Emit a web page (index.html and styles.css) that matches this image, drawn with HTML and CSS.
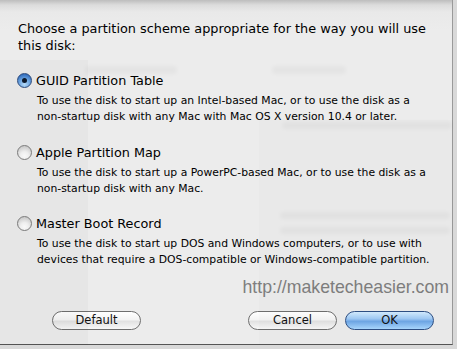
FILE: index.html
```html
<!DOCTYPE html>
<html>
<head>
<meta charset="utf-8">
<link rel="stylesheet" href="styles.css">
</head>
<body>
<div class="screen">
  <div class="sheet">
    <p class="prompt">Choose a partition scheme appropriate for the way you will use this disk:</p>
    <div class="options">
      <div class="option">
        <label class="opt-label"><span class="radio on"></span>GUID Partition Table</label>
        <p class="desc">To use the disk to start up an Intel-based Mac, or to use the disk as a non-startup disk with any Mac with Mac OS X version 10.4 or later.</p>
      </div>
      <div class="option">
        <label class="opt-label"><span class="radio"></span>Apple Partition Map</label>
        <p class="desc">To use the disk to start up a PowerPC-based Mac, or to use the disk as a non-startup disk with any Mac.</p>
      </div>
      <div class="option">
        <label class="opt-label"><span class="radio"></span>Master Boot Record</label>
        <p class="desc">To use the disk to start up DOS and Windows computers, or to use with devices that require a DOS-compatible or Windows-compatible partition.</p>
      </div>
    </div>
    <div class="watermark">http://maketecheasier.com</div>
    <div class="buttons">
      <button class="btn">Default</button>
      <div class="spacer"></div>
      <button class="btn">Cancel</button>
      <button class="btn primary">OK</button>
    </div>
  </div>
  <div class="ghost">
    <div class="gp gp-left"></div>
    <div class="gp gp-mid"></div>
    <div class="gb gb1"></div>
    <div class="gb gb2"></div>
    <div class="gb gb3"></div>
    <div class="gb gb4"></div>
    <div class="gb gb5"></div>
  </div>
</div>
</body>
</html>
```
FILE: styles.css
```css
html, body {
  margin: 0;
  padding: 0;
  background: #3c3c3c;
}
.screen {
  position: relative;
  width: 457px;
  height: 349px;
  overflow: hidden;
  background: #d9d9d9;
  font-family: "DejaVu Sans", sans-serif;
}
.ghost {
  position: absolute;
  inset: 0;
  pointer-events: none;
}
.gp {
  position: absolute;
  background: #000;
  opacity: 0.022;
}
.gp-left { left: 0; top: 60px; width: 88px; height: 285px; }
.gp-mid { left: 259px; top: 120px; width: 194px; height: 225px; opacity: 0.012; }
.gb {
  position: absolute;
  background: #000;
  opacity: 0.03;
  filter: blur(2px);
  border-radius: 3px;
}
.gb1 { left: 85px; top: 66px; width: 92px; height: 8px; }
.gb2 { left: 272px; top: 66px; width: 74px; height: 8px; }
.gb3 { left: 282px; top: 122px; width: 170px; height: 7px; }
.gb4 { left: 280px; top: 212px; width: 170px; height: 7px; }
.gb5 { left: 280px; top: 227px; width: 170px; height: 7px; }
.sheet {
  position: relative;
  box-sizing: border-box;
  width: 453px;
  height: 345px;
  border-right: 1px solid #9a9a9a;
  border-bottom: 1px solid #555;
  background: linear-gradient(to bottom, #bdbdbd 0, #dcdcdc 5px, #e9e9e9 12px, #ececec 30px);
  padding: 20px 0 0 18px;
  display: flex;
  flex-direction: column;
  color: #000;
}
.prompt {
  margin: 0;
  font-size: 12.85px;
  line-height: 17px;
  width: 420px;
}
.options {
  margin-top: 18px;
  display: flex;
  flex-direction: column;
  gap: 18.5px;
}
.opt-label {
  display: flex;
  align-items: center;
  gap: 4px;
  font-size: 12.8px;
  line-height: 17px;
  height: 17px;
  margin-left: -1px;
}
.radio {
  width: 15px;
  height: 15px;
  border-radius: 50%;
  box-sizing: border-box;
  border: 1px solid #7e7e7e;
  background: radial-gradient(circle at 50% 75%, #ffffff 0, #f4f4f4 35%, #d0d0d0 80%);
  display: flex;
  align-items: center;
  justify-content: center;
  flex: none;
}
.radio.on {
  border-color: #2d4c7f;
  background: radial-gradient(circle at 50% 80%, #b9e0ff 0, #6fa9e6 45%, #2f6cc0 85%);
}
.radio.on::after {
  content: "";
  width: 5px;
  height: 5px;
  border-radius: 50%;
  background: #0d1a2e;
}
.desc {
  margin: 4px 0 0 19px;
  font-size: 10.8px;
  line-height: 16px;
  width: 396px;
}
.watermark {
  margin-top: 9px;
  align-self: flex-end;
  margin-right: 3px;
  font-family: "Liberation Sans", Arial, sans-serif;
  font-size: 17.7px;
  line-height: 20px;
  color: #7f7f7f;
}
.buttons {
  margin-top: 14px;
  display: flex;
  gap: 8px;
  padding: 0 18px 0 34px;
}
.spacer { flex: 1; }
.btn {
  width: 89px;
  height: 19px;
  border-radius: 10px;
  border: 1px solid #6f6f6f;
  background: linear-gradient(to bottom, #ffffff 0, #f4f4f4 45%, #e2e2e2 55%, #f8f8f8 100%);
  font-family: "DejaVu Sans", sans-serif;
  font-size: 11.5px;
  color: #111;
  padding: 0;
  line-height: 17px;
}
.btn.primary {
  border-color: #2e4f84;
  background: linear-gradient(to bottom, #d4ecff 0, #9fcaf5 40%, #6fa7e6 55%, #a9d8ff 100%);
}
```
